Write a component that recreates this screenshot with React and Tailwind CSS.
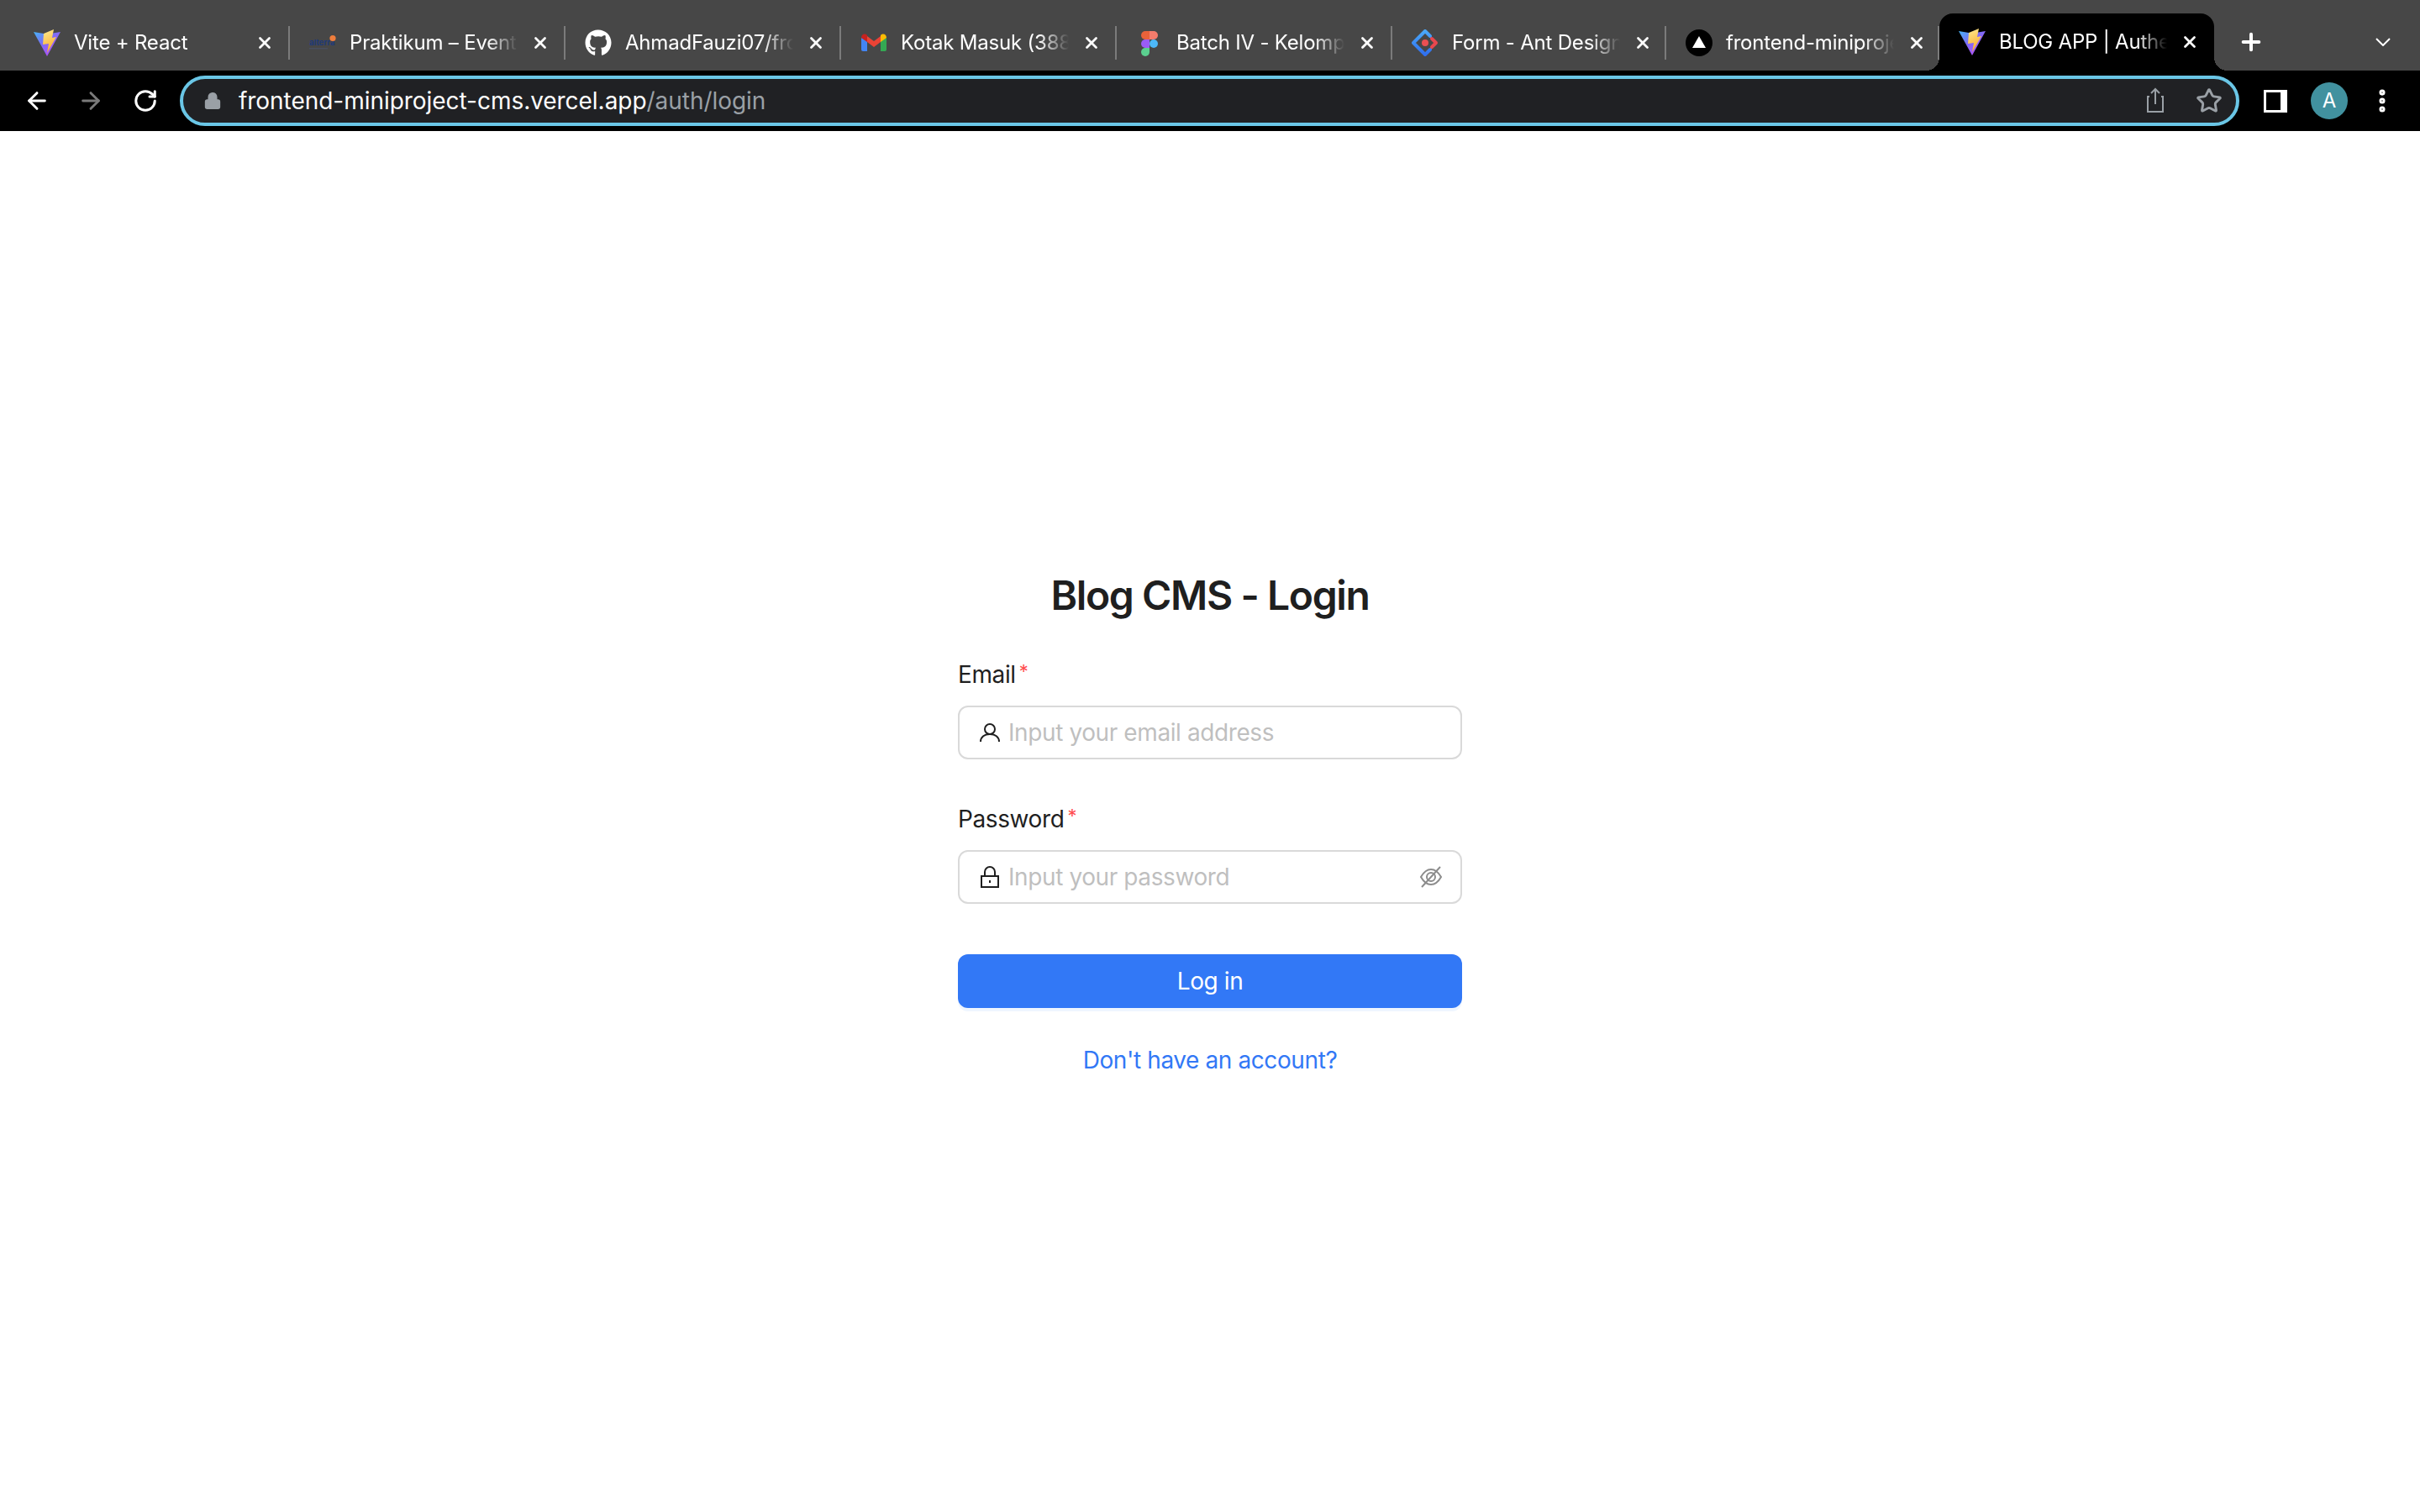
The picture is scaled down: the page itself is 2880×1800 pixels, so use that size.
import React from 'react';
import { FaGithub } from 'react-icons/fa';
import { ArrowLeft, ArrowRight, RotateCw, Lock, Star, Plus, X, EllipsisVertical } from 'lucide-react';

function ViteIcon() {
  return (
    <svg viewBox="0 0 32 32" className="w-8 h-8">
      <defs>
        <linearGradient id="viteBody" x1="0" y1="0" x2="0.7" y2="0.8">
          <stop offset="0" stopColor="#45b4f5" />
          <stop offset="0.55" stopColor="#7c6cf6" />
          <stop offset="1" stopColor="#a855f7" />
        </linearGradient>
        <linearGradient id="viteBolt" x1="0.3" y1="0" x2="0.6" y2="1">
          <stop offset="0" stopColor="#fde68a" />
          <stop offset="1" stopColor="#f9a825" />
        </linearGradient>
      </defs>
      <path d="M0 3 L12 5 L20 5 L32 3 L16 32 Z" fill="url(#viteBody)" />
      <path d="M12 5 L24 0 L22 10 L27 9 L16 28 L18 17 L11 18 Z" fill="url(#viteBolt)" />
    </svg>
  );
}

function AlterraIcon() {
  return (
    <svg viewBox="0 0 32 32" className="w-8 h-8">
      <text x="0" y="19" fontSize="9.5" fontWeight="700" fill="#1f3a78" fontFamily="Inter, sans-serif">alterra</text>
      <rect x="0" y="22" width="22" height="1.5" fill="#4a5570" opacity="0.6" />
      <circle cx="28" cy="10.5" r="3.6" fill="#ee7d3c" />
    </svg>
  );
}

function GmailIcon() {
  return (
    <svg viewBox="0 0 32 32" className="w-8 h-8">
      <path d="M1 10 V24 a2 2 0 0 0 2 2 H8 V13 Z" fill="#4285f4" />
      <path d="M31 10 V24 a2 2 0 0 1 -2 2 H24 V13 Z" fill="#34a853" />
      <path d="M8 8 L16 14 L24 8 V15 L16 21 L8 15 Z" fill="#ea4335" />
      <path d="M1 10 C1 6 5 4 8 7 V15 Z" fill="#c5221f" />
      <path d="M31 10 C31 6 27 4 24 7 V15 Z" fill="#fbbc04" />
    </svg>
  );
}

function FigmaIcon() {
  return (
    <svg viewBox="0 0 32 32" className="w-8 h-8">
      <path d="M16 2 H11 a5 5 0 0 0 0 10 H16 Z" fill="#e8623a" />
      <path d="M16 2 H21 a5 5 0 0 1 0 10 H16 Z" fill="#f47c6c" />
      <path d="M16 12 H11 a5 5 0 0 0 0 10 H16 Z" fill="#9b5cf6" />
      <circle cx="21" cy="17" r="5" fill="#4db8f8" />
      <path d="M11 22 H16 V27 a5 5 0 1 1 -5 -5 Z" fill="#5bd08f" />
    </svg>
  );
}

function AntIcon() {
  return (
    <svg viewBox="0 0 32 32" className="w-8 h-8" fill="none">
      <defs>
        <linearGradient id="antBody" x1="0.5" y1="0" x2="0.5" y2="1" gradientUnits="objectBoundingBox">
          <stop offset="0" stopColor="#4aa8f8" />
          <stop offset="1" stopColor="#2f6fef" />
        </linearGradient>
      </defs>
      <path d="M22 8 L16 2 L2 16 L16 30 L22 24" stroke="url(#antBody)" strokeWidth="4" strokeLinecap="round" strokeLinejoin="round" />
      <path d="M24 11 L29 16 L24 21" stroke="#e8474e" strokeWidth="4" strokeLinecap="round" strokeLinejoin="round" />
      <circle cx="16" cy="16" r="4" fill="#ea4f52" />
    </svg>
  );
}

function VercelIcon() {
  return (
    <svg viewBox="0 0 32 32" className="w-8 h-8">
      <circle cx="16" cy="16" r="16" fill="#000" />
      <path d="M16 8 L24 22 H8 Z" fill="#fff" />
    </svg>
  );
}

const tabs = [
  { icon: <ViteIcon />, title: 'Vite + React', width: 'w-[328px]' },
  { icon: <AlterraIcon />, title: 'Praktikum – Events', width: 'w-[328px]' },
  { icon: <FaGithub className="w-8 h-8 text-white" />, title: 'AhmadFauzi07/frontend', width: 'w-[328px]' },
  { icon: <GmailIcon />, title: 'Kotak Masuk (388)', width: 'w-[328px]' },
  { icon: <FigmaIcon />, title: 'Batch IV - Kelompok', width: 'w-[328px]' },
  { icon: <AntIcon />, title: 'Form - Ant Design', width: 'w-[326px]' },
  { icon: <VercelIcon />, title: 'frontend-miniproject', width: 'w-[325px]' },
];

function Tab({ icon, title, active, width }) {
  return (
    <div className={active
      ? 'relative w-[327px] h-[68px] bg-black rounded-t-2xl flex items-center pl-[23px] shrink-0'
      : `${width} h-10 border-r-2 border-[#7b7b7b] flex items-center pl-[23px] mb-[13px] shrink-0`}>
      <div className="w-8 h-8 shrink-0">{icon}</div>
      <span className="ml-4 w-[200px] overflow-hidden whitespace-nowrap text-[24px] tracking-[-0.2px] text-white [mask-image:linear-gradient(to_right,black_82%,transparent)]">
        {title}
      </span>
      <X size={22} strokeWidth={3} className="ml-4 text-white shrink-0" />
      {active && (
        <>
          {/* curved feet of the selected tab */}
          <div className="absolute bottom-0 left-[-16px] w-4 h-4 bg-[radial-gradient(circle_at_0_0,transparent_16px,black_16px)]" />
          <div className="absolute bottom-0 right-[-16px] w-4 h-4 bg-[radial-gradient(circle_at_100%_0,transparent_16px,black_16px)]" />
        </>
      )}
    </div>
  );
}

function BrowserChrome() {
  return (
    <div className="shrink-0">
      <div className="h-[84px] bg-[#474747] flex items-end pl-[17px]">
        {tabs.map((t) => <Tab key={t.title} {...t} />)}
        <Tab icon={<ViteIcon />} title="BLOG APP | Authentication" active />
        <Plus size={32} strokeWidth={3} className="text-white ml-[28px] mb-[18px]" />
        <svg viewBox="0 0 18 10" className="w-[18px] h-[10px] ml-[132px] mb-[29px]" fill="none" stroke="#fff" strokeWidth="2">
          <path d="M1 1 L9 9 L17 1" />
        </svg>
      </div>
      <div className="h-[72px] bg-black flex items-center pl-[28px]">
        <ArrowLeft size={32} strokeWidth={2.2} className="text-white" />
        <ArrowRight size={32} strokeWidth={2.2} className="text-[#7a7a7a] ml-[32px]" />
        <RotateCw size={30} strokeWidth={2.4} className="text-white ml-[34px]" />
        <div className="ml-[26px] w-[2451px] h-[60px] rounded-full border-4 border-[#6ac6e6] bg-[#202124] flex items-center pl-[24px] pr-[16px]">
          <Lock size={22} fill="#9aa0a6" className="text-[#9aa0a6]" />
          <span className="ml-[20px] text-[28px] tracking-[-0.04px] text-white">
            frontend-miniproject-cms.vercel.app<span className="text-[#9aa0a6]">/auth/login</span>
          </span>
          <div className="ml-auto flex items-center gap-[36px]">
            <svg viewBox="0 0 24 32" className="w-6 h-8" fill="none" stroke="#9aa0a6" strokeWidth="2">
              <path d="M5 11 H3 V29 H21 V11 H19" />
              <path d="M12 20 V2 M7 7 L12 2 L17 7" />
            </svg>
            <Star size={32} strokeWidth={2.2} className="text-[#9aa0a6]" />
          </div>
        </div>
        <div className="ml-[29px] w-[28px] h-[27px] border-[3px] border-white border-r-[8px] bg-black shrink-0" />
        <div className="ml-[28px] w-11 h-11 rounded-full bg-[#41919f] flex items-center justify-center text-white text-[24px] shrink-0">A</div>
        <EllipsisVertical size={34} strokeWidth={3} className="text-white ml-[24px] shrink-0" />
      </div>
    </div>
  );
}

function UserIcon() {
  return (
    <svg viewBox="0 0 24 24" className="w-6 h-6" fill="none" stroke="#1f1f1f" strokeWidth="2">
      <circle cx="12" cy="8" r="6" />
      <path d="M1 23 C1 17 6 14 12 14 C18 14 23 17 23 23" />
    </svg>
  );
}

function LockIcon() {
  return (
    <svg viewBox="0 0 24 26" className="w-6 h-[26px]" fill="none" stroke="#1f1f1f" strokeWidth="2">
      <rect x="2" y="12" width="20" height="13" />
      <path d="M6 12 V7 a6 6 0 0 1 12 0 V12" />
      <path d="M12 17 V20" />
    </svg>
  );
}

function EyeOffIcon() {
  return (
    <svg viewBox="0 0 28 28" className="w-7 h-7" fill="none" stroke="#8c8c8c" strokeWidth="2">
      <path d="M2 14 C6 7 10 5 14 5 C18 5 22 7 26 14 C22 21 18 23 14 23 C10 23 6 21 2 14 Z" />
      <circle cx="14" cy="14" r="5" />
      <path d="M25 2 L3 26" />
    </svg>
  );
}

function Field({ label, icon, placeholder, suffix }) {
  return (
    <div>
      <label className="flex items-start h-9 text-[28px] leading-9 tracking-[-0.4px] text-[#1f1f1f]">
        {label}
        <span className="ml-1 text-[22px] leading-7 text-[#ff4d4f]">*</span>
      </label>
      <div className="mt-[19px] h-16 rounded-xl border-2 border-[#d9d9d9] flex items-center pl-6 pr-[21px]">
        {icon}
        <input
          placeholder={placeholder}
          className="ml-[10px] flex-1 bg-transparent outline-none text-[28px] tracking-[-0.4px] placeholder:text-[#bfbfbf]"
        />
        {suffix}
      </div>
    </div>
  );
}

export default function App() {
  return (
    <div className="min-h-screen flex flex-col bg-white font-['Inter','Liberation_Sans',sans-serif]">
      <BrowserChrome />

      <div className="flex-1 flex items-center justify-center">
        <div className="w-[600px]">
          <h1 className="text-center text-[48px] leading-[64px] tracking-[-1.4px] font-semibold text-[#1f1f1f]">Blog CMS - Login</h1>

          <div className="mt-[44px] space-y-[53px]">
            <Field label="Email" icon={<UserIcon />} placeholder="Input your email address" />
            <Field label="Password" icon={<LockIcon />} placeholder="Input your password" suffix={<EyeOffIcon />} />
          </div>

          <button className="mt-[60px] w-full h-16 rounded-xl bg-[#3278f6] text-white text-[28px] tracking-[-0.4px] shadow-[0_4px_0_#eff6ff]">
            Log in
          </button>

          <p className="mt-[44px] text-center text-[28px] leading-9 tracking-[-0.4px] text-[#3278f6]">Don't have an account?</p>
        </div>
      </div>
    </div>
  );
}
